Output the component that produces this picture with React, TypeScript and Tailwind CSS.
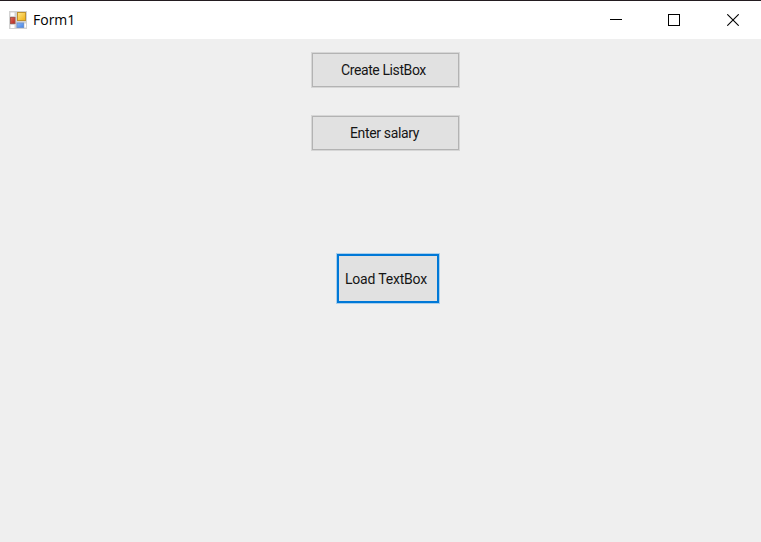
import type { ReactNode } from "react";

function FormIcon() {
  return (
    <svg width="18" height="18" viewBox="0 0 18 18" className="block">
      <defs>
        <linearGradient id="gold" x1="0" y1="0" x2="1" y2="1">
          <stop offset="0" stopColor="#ffe98c" />
          <stop offset="1" stopColor="#f0ae10" />
        </linearGradient>
        <linearGradient id="blue" x1="0" y1="0" x2="1" y2="1">
          <stop offset="0" stopColor="#8cb8fa" />
          <stop offset="1" stopColor="#4584e4" />
        </linearGradient>
        <linearGradient id="red" x1="0" y1="0" x2="1" y2="1">
          <stop offset="0" stopColor="#e06a5c" />
          <stop offset="1" stopColor="#b4241c" />
        </linearGradient>
      </defs>
      <rect width="18" height="18" fill="#d2d2d2" />
      <path d="M1.5 1.5h4v3.5h-4zM1.5 14h4v3h-4zM15.5 12.5h1.5v4h-1.5z" fill="#ffffff" />
      <rect x="8.5" y="1.5" width="8" height="8" fill="url(#gold)" stroke="#c0922c" />
      <rect x="1.5" y="6.5" width="4.5" height="6" fill="url(#red)" stroke="#a8554c" />
      <rect x="8" y="12" width="6.5" height="4.5" fill="url(#blue)" stroke="#6c94d4" />
    </svg>
  );
}

function TitleBar() {
  return (
    <header className="flex h-[39px] items-center border-t border-[#231c20] bg-white pl-[9px]">
      <FormIcon />
      <span className="ml-[6px] flex-1 font-['Open_Sans','Noto_Sans',sans-serif] text-[14px] leading-[20px] text-black">
        Form1
      </span>
      <div className="flex h-full text-black">
        <div className="flex w-[58px] items-center justify-center">
          <svg width="12" height="12" viewBox="0 0 12 12" shapeRendering="crispEdges">
            <path d="M0 5.5h12" stroke="currentColor" />
          </svg>
        </div>
        <div className="flex w-[58px] items-center justify-center">
          <svg width="12" height="12" viewBox="0 0 12 12" shapeRendering="crispEdges">
            <rect x="0.5" y="0.5" width="11" height="11" fill="none" stroke="currentColor" />
          </svg>
        </div>
        <div className="flex w-[58px] items-center justify-center pl-[2px]">
          <svg width="12" height="12" viewBox="0 0 12 12">
            <path d="M0.3 0.3l11.4 11.4M11.7 0.3L0.3 11.7" stroke="currentColor" strokeWidth="1.1" />
          </svg>
        </div>
      </div>
    </header>
  );
}

function FormButton({ className, children }: { className: string; children: ReactNode }) {
  return (
    <button
      type="button"
      className={`flex items-center whitespace-nowrap bg-[#e1e1e1] font-['Roboto','Liberation_Sans',sans-serif] text-[14px] leading-[18px] text-[#151515] ${className}`}
    >
      {children}
    </button>
  );
}

export default function App() {
  return (
    <div className="flex h-[542px] w-[761px] flex-col bg-[#efefef]">
      <TitleBar />
      <main className="flex flex-1 flex-col items-start pt-[14px]">
        <FormButton className="ml-[312px] h-[34px] w-[147px] border border-[#b3b3b3] pl-[28px] tracking-[-0.4px] shadow-[0_0_0_1px_#d6d6d6]">
          Create ListBox
        </FormButton>
        <FormButton className="mt-[29px] ml-[312px] h-[34px] w-[147px] border border-[#b3b3b3] pl-[37px] tracking-[-0.35px] shadow-[0_0_0_1px_#d6d6d6]">
          Enter salary
        </FormButton>
        <FormButton className="mt-[104px] ml-[337px] h-[49px] w-[102px] border-2 border-[#0078d7] pl-[6px] tracking-[-0.2px] shadow-[0_0_0_1px_#a9cfec]">
          Load TextBox
        </FormButton>
      </main>
    </div>
  );
}
